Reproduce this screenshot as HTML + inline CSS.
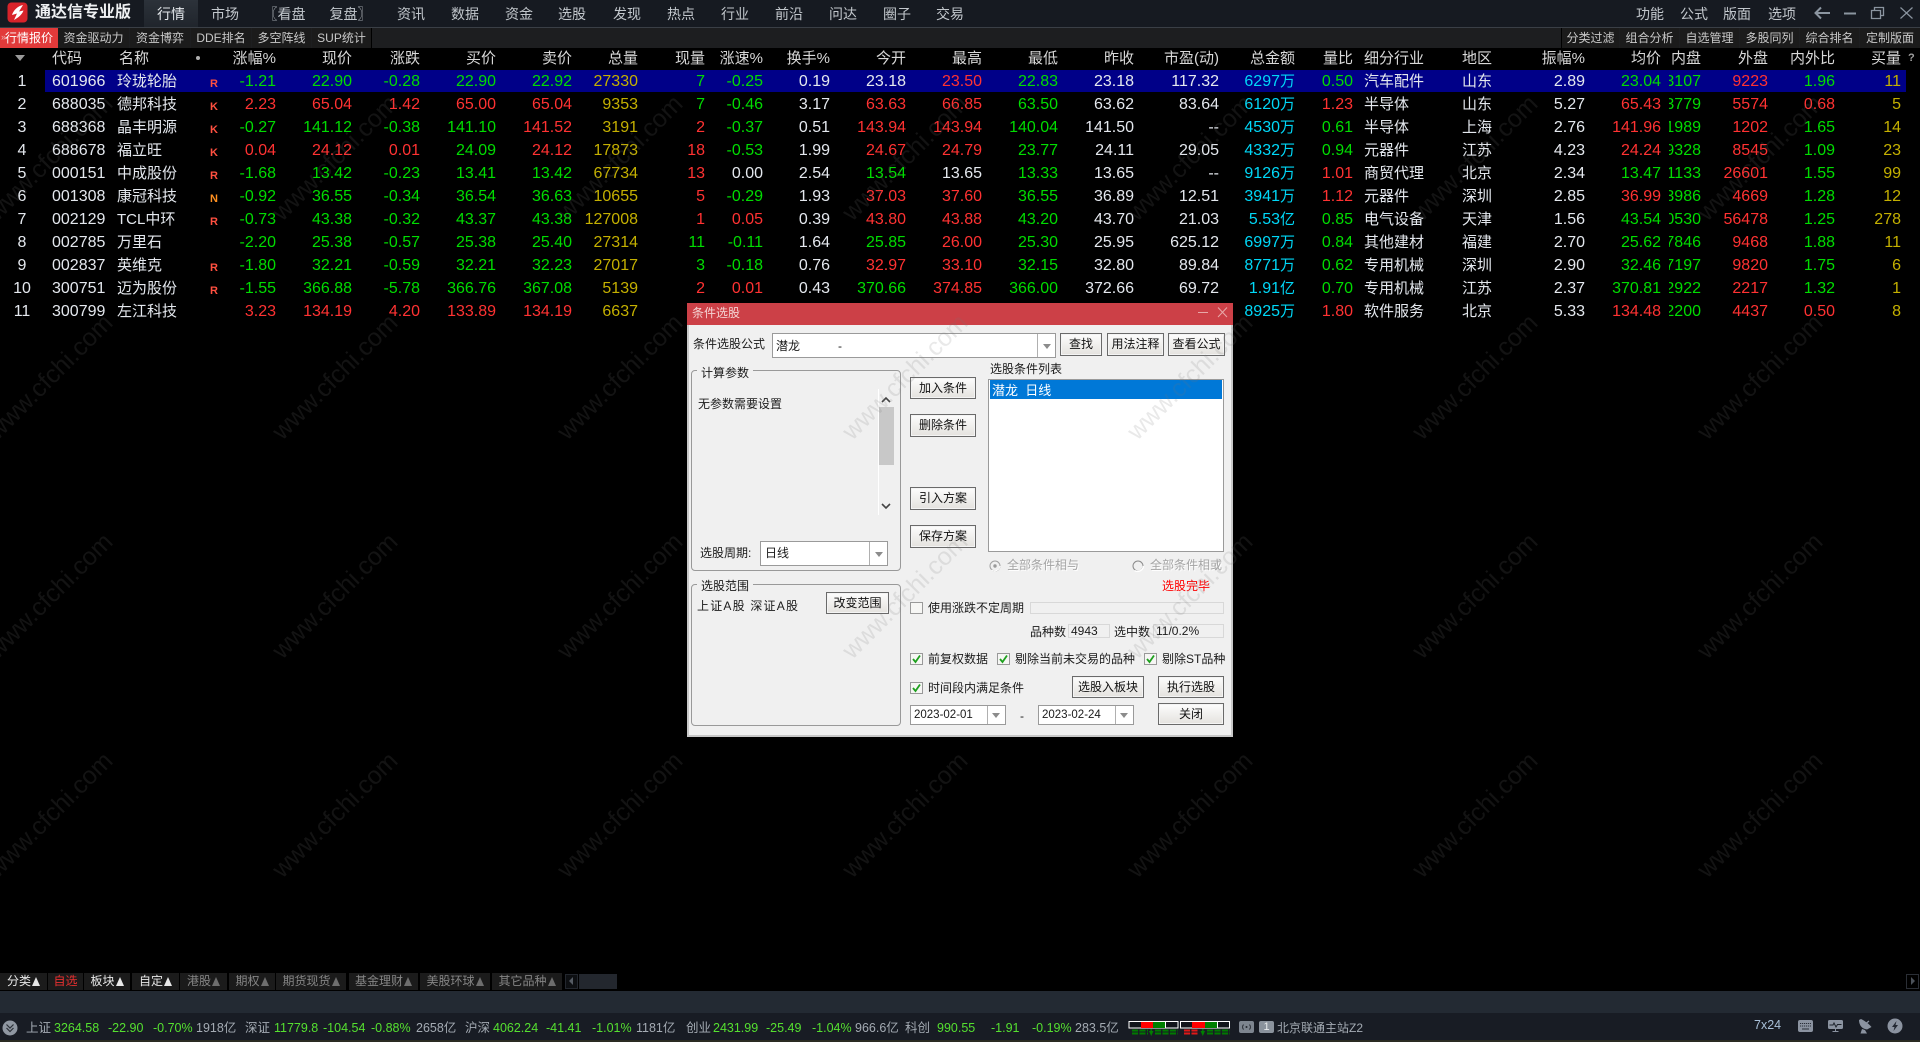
<!DOCTYPE html>
<html lang="zh"><head><meta charset="utf-8"><title>通达信专业版</title>
<style>
html,body{margin:0;padding:0;background:#000;width:1920px;height:1042px;overflow:hidden}
body{position:relative;font-family:"Liberation Sans","Noto Sans CJK SC",sans-serif;color:#e4e8ee}
div,span,svg{box-sizing:border-box}
.a{position:absolute}
.m{position:absolute;top:0;height:27px;line-height:29px;font-size:14px;color:#c2c7cc;transform:translateX(-50%);white-space:nowrap}
.st{position:absolute;top:28px;height:20px;line-height:20px;font-size:12px;color:#c8c8c8;background:#1b1b1b;text-align:center;white-space:nowrap;overflow:hidden}
.row{position:absolute;left:0;width:1920px;height:23px;line-height:23px}
.row span{position:absolute;top:0;white-space:nowrap;font-size:16px}
.row small{font-size:15px}
.row span:nth-child(1){left:0;width:44px;text-align:center}
.row span:nth-child(2){left:52px}
.row span:nth-child(3){left:117px;font-size:15px}
.row span:nth-child(4){left:210px;font-size:11px;font-weight:bold;top:3px;color:#ff5040}
.row span:nth-child(5){right:1644px}.row span:nth-child(6){right:1568px}.row span:nth-child(7){right:1500px}
.row span:nth-child(8){right:1424px}.row span:nth-child(9){right:1348px}.row span:nth-child(10){right:1282px;color:#c4b000}
.row span:nth-child(11){right:1215px}.row span:nth-child(12){right:1157px}.row span:nth-child(13){right:1090px}
.row span:nth-child(14){right:1014px}.row span:nth-child(15){right:938px}.row span:nth-child(16){right:862px}
.row span:nth-child(17){right:786px}.row span:nth-child(18){right:701px}.row span:nth-child(19){right:625px;color:#00d8f8}
.row span:nth-child(20){right:567px}.row span:nth-child(21){left:1364px;font-size:15px}.row span:nth-child(22){left:1462px;font-size:15px}
.row span:nth-child(23){right:335px}.row span:nth-child(24){right:259px}
.row span:nth-child(25){left:1669px;width:32px;overflow:hidden;text-align:right;direction:rtl;color:#00dc00}
.row span:nth-child(26){right:152px;color:#ff3232}.row span:nth-child(27){right:85px}.row span:nth-child(28){right:19px;color:#c4b000}
.hd span,.hd span:nth-child(n){font-size:15px;color:#d8d8d8;top:0}
.g{color:#00dc00}.r{color:#ff3232}
.t{position:absolute;white-space:nowrap;height:16px;line-height:16px;font-size:12px;color:#1a1a1a}
.btn{position:absolute;border:1px solid #6a6a6a;background:linear-gradient(#fdfdfd,#e4e2de);box-shadow:inset 0 0 0 1px #f4f4f4;font-size:12px;color:#111;text-align:center;white-space:nowrap}
.box{position:absolute;background:#fff;border:1px solid #9a9a9a}
.sep{position:absolute;width:1px;background:#b0b0b0}
.tri{position:absolute;width:0;height:0;border-left:4px solid transparent;border-right:4px solid transparent;border-top:5px solid #8c8c8c}
.grp{position:absolute;border:1px solid #999;border-radius:4px}
.lab{position:absolute;background:#f0f0f0;height:16px;line-height:16px;font-size:12px;color:#1a1a1a;padding:0 4px;white-space:nowrap}
.ck{position:absolute;width:13px;height:12px;border:1px solid #999;background:#f6f6f4}
.ck svg{position:absolute;left:0;top:0}
.dis{color:#a4a4a4;text-shadow:1px 1px 0 #fff}
.fld{position:absolute;border:1px solid #d8d8d8;height:14px;line-height:12px;font-size:12px;color:#1a1a1a;padding-left:2px;white-space:nowrap}
.tb{position:absolute;top:973px;height:17px;line-height:17px;background:#1b1b1b;font-size:12px;color:#e8e8e8;display:flex;align-items:center;justify-content:center;white-space:nowrap}
.tb i{display:inline-block;width:0;height:0;border-left:4px solid transparent;border-right:4px solid transparent;border-bottom:9px solid #e8e8e8;margin-left:1px}
.tb.d{color:#858585}.tb.d i{border-bottom-color:#6e6e6e}
.s{position:absolute;top:1020px;height:16px;line-height:16px;font-size:12.5px;white-space:nowrap;color:#a4abb3}
.s.n{color:#55e030}
.wm{position:absolute;width:220px;height:30px;margin-left:-110px;margin-top:-15px;line-height:30px;text-align:center;font-size:25px;color:rgba(120,120,120,.16);transform:rotate(-45deg);white-space:nowrap;z-index:50;pointer-events:none}
</style></head><body>

<!-- top bar -->
<div class="a" style="left:0;top:0;width:1920px;height:27px;background:#161a21"></div>
<div class="a" style="left:0;top:27px;width:1920px;height:1px;background:#3a3f46"></div>
<div class="a" style="left:144px;top:0;width:54px;height:27px;background:linear-gradient(#2c323a,#20252c)"></div>
<svg class="a" style="left:7px;top:2px" width="21" height="21" viewBox="0 0 21 21"><rect x="0.5" y="0.5" width="20" height="20" rx="4" fill="#d8232a"/><path d="M16 3 C11 4 6.5 8 5 13 L10 11.5 L7 18 C11.5 15.5 15 12.5 16.5 8.5 L12 9.5 Z" fill="#fff"/></svg>
<div class="a" style="left:35px;top:0;height:27px;line-height:26px;font-size:16px;font-weight:bold;color:#eef0f2;white-space:nowrap">通达信专业版</div>
<div class="m" style="left:171px;color:#e4e8ec">行情</div>
<div class="m" style="left:225px">市场</div>
<div class="m" style="left:288px"><span style="margin-left:-7px">〖</span>看盘</div>
<div class="m" style="left:347px">复盘<span style="margin-right:-7px">〗</span></div>
<div class="m" style="left:411px">资讯</div>
<div class="m" style="left:465px">数据</div>
<div class="m" style="left:519px">资金</div>
<div class="m" style="left:572px">选股</div>
<div class="m" style="left:627px">发现</div>
<div class="m" style="left:681px">热点</div>
<div class="m" style="left:735px">行业</div>
<div class="m" style="left:789px">前沿</div>
<div class="m" style="left:843px">问达</div>
<div class="m" style="left:897px">圈子</div>
<div class="m" style="left:950px">交易</div>
<div class="m" style="left:1650px">功能</div>
<div class="m" style="left:1694px">公式</div>
<div class="m" style="left:1737px">版面</div>
<div class="m" style="left:1782px">选项</div>
<svg class="a" style="left:1812px;top:4px" width="104" height="18" viewBox="0 0 104 18" fill="none" stroke="#8b95a0">
<path d="M3.5 9 H18 M9 3.5 L3.5 9 L9 14.5" stroke-width="2"/>
<path d="M32 9.5 H44" stroke-width="2"/>
<path d="M59.5 6.5 H68.5 V14.5 H59.5 Z M62.5 6.5 V3.5 H71.5 V11.5 H68.5" stroke-width="1.3"/>
<path d="M88.5 3.5 L100.5 14.5 M100.5 3.5 L88.5 14.5" stroke-width="1.2"/>
</svg>

<!-- sub bar -->
<div class="a" style="left:0;top:28px;width:1920px;height:20px;background:#1d1e20"></div>
<div class="st" style="left:0;width:58px;background:#e23a3a;color:#fff">行情报价</div>
<div class="a" style="left:1px;top:31px;font-size:9px;line-height:12px;color:#f0b0b0">»</div>
<div class="st" style="left:58px;width:71px">资金驱动力</div>
<div class="st" style="left:130px;width:60px">资金博弈</div>
<div class="st" style="left:191px;width:60px">DDE排名</div>
<div class="st" style="left:252px;width:59px">多空阵线</div>
<div class="st" style="left:312px;width:59px">SUP统计</div>
<div class="a" style="left:371px;top:28px;width:1px;height:20px;background:#000"></div>
<div class="st" style="left:1561px;width:58px;border-left:1px solid #000">分类过滤</div>
<div class="st" style="left:1620px;width:59px">组合分析</div>
<div class="st" style="left:1680px;width:59px">自选管理</div>
<div class="st" style="left:1740px;width:59px">多股同列</div>
<div class="st" style="left:1800px;width:59px">综合排名</div>
<div class="st" style="left:1860px;width:60px">定制版面</div>

<!-- table header -->
<div class="tri" style="left:15px;top:55px;border-left-width:5px;border-right-width:5px;border-top:6px solid #9a9a9a"></div>
<div class="a" style="left:196px;top:56px;width:4px;height:4px;border-radius:50%;background:#b0b0b0"></div>
<div class="row hd" style="top:47px"><span></span><span>代码</span><span style="left:119px">名称</span><span></span><span>涨幅%</span><span>现价</span><span>涨跌</span><span>买价</span><span>卖价</span><span>总量</span><span>现量</span><span>涨速%</span><span>换手%</span><span>今开</span><span>最高</span><span>最低</span><span>昨收</span><span>市盈(动)</span><span>总金额</span><span>量比</span><span>细分行业</span><span>地区</span><span>振幅%</span><span>均价</span><span>内盘</span><span>外盘</span><span>内外比</span><span>买量</span></div>
<div class="a" style="left:1908px;top:50px;font-size:11px;font-weight:bold;line-height:16px;color:#a0a0a0">?</div>

<!-- rows -->
<div class="a" style="left:45px;top:70px;width:1861px;height:22px;background:#000088"></div>
<div class="row" style="top:70px"><span>1</span><span>601966</span><span>玲珑轮胎</span><span>R</span><span class="g">-1.21</span><span class="g">22.90</span><span class="g">-0.28</span><span class="g">22.90</span><span class="g">22.92</span><span>27330</span><span class="g">7</span><span class="g">-0.25</span><span>0.19</span><span>23.18</span><span class="r">23.50</span><span class="g">22.83</span><span>23.18</span><span>117.32</span><span>6297<small>万</small></span><span class="g">0.50</span><span>汽车配件</span><span>山东</span><span>2.89</span><span class="g">23.04</span><span>3107</span><span>9223</span><span class="g">1.96</span><span>11</span></div>
<div class="row" style="top:93px"><span>2</span><span>688035</span><span>德邦科技</span><span>K</span><span class="r">2.23</span><span class="r">65.04</span><span class="r">1.42</span><span class="r">65.00</span><span class="r">65.04</span><span>9353</span><span class="g">7</span><span class="g">-0.46</span><span>3.17</span><span class="r">63.63</span><span class="r">66.85</span><span class="g">63.50</span><span>63.62</span><span>83.64</span><span>6120<small>万</small></span><span class="r">1.23</span><span>半导体</span><span>山东</span><span>5.27</span><span class="r">65.43</span><span>3779</span><span>5574</span><span class="r">0.68</span><span>5</span></div>
<div class="row" style="top:116px"><span>3</span><span>688368</span><span>晶丰明源</span><span>K</span><span class="g">-0.27</span><span class="g">141.12</span><span class="g">-0.38</span><span class="g">141.10</span><span class="r">141.52</span><span>3191</span><span class="r">2</span><span class="g">-0.37</span><span>0.51</span><span class="r">143.94</span><span class="r">143.94</span><span class="g">140.04</span><span>141.50</span><span>--</span><span>4530<small>万</small></span><span class="g">0.61</span><span>半导体</span><span>上海</span><span>2.76</span><span class="r">141.96</span><span>1989</span><span>1202</span><span class="g">1.65</span><span>14</span></div>
<div class="row" style="top:139px"><span>4</span><span>688678</span><span>福立旺</span><span>K</span><span class="r">0.04</span><span class="r">24.12</span><span class="r">0.01</span><span class="g">24.09</span><span class="r">24.12</span><span>17873</span><span class="r">18</span><span class="g">-0.53</span><span>1.99</span><span class="r">24.67</span><span class="r">24.79</span><span class="g">23.77</span><span>24.11</span><span>29.05</span><span>4332<small>万</small></span><span class="g">0.94</span><span>元器件</span><span>江苏</span><span>4.23</span><span class="r">24.24</span><span>9328</span><span>8545</span><span class="g">1.09</span><span>23</span></div>
<div class="row" style="top:162px"><span>5</span><span>000151</span><span>中成股份</span><span>R</span><span class="g">-1.68</span><span class="g">13.42</span><span class="g">-0.23</span><span class="g">13.41</span><span class="g">13.42</span><span>67734</span><span class="r">13</span><span>0.00</span><span>2.54</span><span class="g">13.54</span><span>13.65</span><span class="g">13.33</span><span>13.65</span><span>--</span><span>9126<small>万</small></span><span class="r">1.01</span><span>商贸代理</span><span>北京</span><span>2.34</span><span class="g">13.47</span><span>1133</span><span>26601</span><span class="g">1.55</span><span>99</span></div>
<div class="row" style="top:185px"><span>6</span><span>001308</span><span>康冠科技</span><span style="color:#ff9020">N</span><span class="g">-0.92</span><span class="g">36.55</span><span class="g">-0.34</span><span class="g">36.54</span><span class="g">36.63</span><span>10655</span><span class="r">5</span><span class="g">-0.29</span><span>1.93</span><span class="r">37.03</span><span class="r">37.60</span><span class="g">36.55</span><span>36.89</span><span>12.51</span><span>3941<small>万</small></span><span class="r">1.12</span><span>元器件</span><span>深圳</span><span>2.85</span><span class="r">36.99</span><span>3986</span><span>4669</span><span class="g">1.28</span><span>12</span></div>
<div class="row" style="top:208px"><span>7</span><span>002129</span><span>TCL中环</span><span>R</span><span class="g">-0.73</span><span class="g">43.38</span><span class="g">-0.32</span><span class="g">43.37</span><span class="g">43.38</span><span>127008</span><span class="r">1</span><span class="r">0.05</span><span>0.39</span><span class="r">43.80</span><span class="r">43.88</span><span class="g">43.20</span><span>43.70</span><span>21.03</span><span>5.53<small>亿</small></span><span class="g">0.85</span><span>电气设备</span><span>天津</span><span>1.56</span><span class="g">43.54</span><span>0530</span><span>56478</span><span class="g">1.25</span><span>278</span></div>
<div class="row" style="top:231px"><span>8</span><span>002785</span><span>万里石</span><span></span><span class="g">-2.20</span><span class="g">25.38</span><span class="g">-0.57</span><span class="g">25.38</span><span class="g">25.40</span><span>27314</span><span class="g">11</span><span class="g">-0.11</span><span>1.64</span><span class="g">25.85</span><span class="r">26.00</span><span class="g">25.30</span><span>25.95</span><span>625.12</span><span>6997<small>万</small></span><span class="g">0.84</span><span>其他建材</span><span>福建</span><span>2.70</span><span class="g">25.62</span><span>7846</span><span>9468</span><span class="g">1.88</span><span>11</span></div>
<div class="row" style="top:254px"><span>9</span><span>002837</span><span>英维克</span><span>R</span><span class="g">-1.80</span><span class="g">32.21</span><span class="g">-0.59</span><span class="g">32.21</span><span class="g">32.23</span><span>27017</span><span class="g">3</span><span class="g">-0.18</span><span>0.76</span><span class="r">32.97</span><span class="r">33.10</span><span class="g">32.15</span><span>32.80</span><span>89.84</span><span>8771<small>万</small></span><span class="g">0.62</span><span>专用机械</span><span>深圳</span><span>2.90</span><span class="g">32.46</span><span>7197</span><span>9820</span><span class="g">1.75</span><span>6</span></div>
<div class="row" style="top:277px"><span>10</span><span>300751</span><span>迈为股份</span><span>R</span><span class="g">-1.55</span><span class="g">366.88</span><span class="g">-5.78</span><span class="g">366.76</span><span class="g">367.08</span><span>5139</span><span class="r">2</span><span class="r">0.01</span><span>0.43</span><span class="g">370.66</span><span class="r">374.85</span><span class="g">366.00</span><span>372.66</span><span>69.72</span><span>1.91<small>亿</small></span><span class="g">0.70</span><span>专用机械</span><span>江苏</span><span>2.37</span><span class="g">370.81</span><span>2922</span><span>2217</span><span class="g">1.32</span><span>1</span></div>
<div class="row" style="top:300px"><span>11</span><span>300799</span><span>左江科技</span><span></span><span class="r">3.23</span><span class="r">134.19</span><span class="r">4.20</span><span class="r">133.89</span><span class="r">134.19</span><span>6637</span><span></span><span></span><span></span><span></span><span></span><span></span><span></span><span></span><span>8925<small>万</small></span><span class="r">1.80</span><span>软件服务</span><span>北京</span><span>5.33</span><span class="r">134.48</span><span>2200</span><span>4437</span><span class="r">0.50</span><span>8</span></div>

<!-- dialog -->
<div class="a" style="left:687px;top:303px;width:546px;height:434px;background:#f0f0f0;border:2px solid #c8c8c8;border-top:0"></div>
<div class="a" style="left:687px;top:303px;width:546px;height:22px;background:#cc4047"></div>
<div class="t" style="left:692px;top:305px;color:#f4d4d4">条件选股</div>
<svg class="a" style="left:1197px;top:306px" width="32" height="13" viewBox="0 0 32 13" fill="none" stroke="#e8a8a8"><path d="M1 6.5 H11"/><path d="M21 1.5 L30 11 M30 1.5 L21 11"/></svg>

<div class="t" style="left:693px;top:336px">条件选股公式</div>
<div class="box" style="left:772px;top:333px;width:284px;height:25px"></div>
<div class="sep" style="left:1037px;top:334px;height:23px"></div>
<div class="tri" style="left:1043px;top:344px"></div>
<div class="t" style="left:776px;top:338px">潜龙</div>
<div class="t" style="left:838px;top:338px">-</div>
<div class="btn" style="left:1060px;top:333px;width:42px;height:23px;line-height:21px">查找</div>
<div class="btn" style="left:1107px;top:333px;width:57px;height:23px;line-height:21px">用法注释</div>
<div class="btn" style="left:1168px;top:333px;width:57px;height:23px;line-height:21px">查看公式</div>

<div class="grp" style="left:691px;top:370px;width:210px;height:201px"></div>
<div class="lab" style="left:697px;top:365px">计算参数</div>
<div class="t" style="left:698px;top:396px">无参数需要设置</div>
<div class="a" style="left:878px;top:389px;width:1px;height:126px;background:#fff"></div>
<div class="a" style="left:879px;top:407px;width:15px;height:58px;background:#c8c8c8"></div>
<svg class="a" style="left:880px;top:395px" width="12" height="118" viewBox="0 0 12 118" fill="none" stroke="#444" stroke-width="1.6"><path d="M2 7 L6 3 L10 7"/><path d="M2 109 L6 113 L10 109"/></svg>
<div class="t" style="left:700px;top:545px">选股周期:</div>
<div class="box" style="left:760px;top:541px;width:128px;height:25px"></div>
<div class="sep" style="left:869px;top:542px;height:23px"></div>
<div class="tri" style="left:875px;top:552px"></div>
<div class="t" style="left:765px;top:545px">日线</div>

<div class="btn" style="left:910px;top:377px;width:66px;height:22px;line-height:20px">加入条件</div>
<div class="btn" style="left:910px;top:414px;width:66px;height:23px;line-height:21px">删除条件</div>
<div class="btn" style="left:910px;top:487px;width:66px;height:23px;line-height:21px">引入方案</div>
<div class="btn" style="left:910px;top:525px;width:66px;height:23px;line-height:21px">保存方案</div>

<div class="t" style="left:990px;top:361px">选股条件列表</div>
<div class="box" style="left:988px;top:379px;width:236px;height:173px"></div>
<div class="a" style="left:990px;top:380px;width:232px;height:19px;background:#0078d7"></div>
<div class="t" style="left:992px;top:383px;font-size:13px;color:#fff">潜龙&nbsp; 日线</div>

<svg class="a" style="left:988px;top:559px" width="14" height="14" viewBox="0 0 14 14"><circle cx="7" cy="7" r="5" fill="#f0f0f0" stroke="#a0a0a0"/><path d="M3.5 11 A5.5 5.5 0 0 0 12 7" fill="none" stroke="#fff"/><circle cx="7" cy="7" r="1.7" fill="#9a9a9a"/></svg>
<div class="t dis" style="left:1007px;top:557px">全部条件相与</div>
<svg class="a" style="left:1131px;top:559px" width="14" height="14" viewBox="0 0 14 14"><circle cx="7" cy="7" r="5" fill="#f0f0f0" stroke="#8a8a8a"/><path d="M3.5 11.5 A6 6 0 0 0 12.5 7" fill="none" stroke="#fff" stroke-width="1.5"/></svg>
<div class="t dis" style="left:1150px;top:557px">全部条件相或</div>
<div class="t" style="left:1162px;top:578px;color:#f00">选股完毕</div>

<div class="grp" style="left:691px;top:584px;width:210px;height:142px"></div>
<div class="lab" style="left:697px;top:578px">选股范围</div>
<div class="t" style="left:697px;top:598px;letter-spacing:1.2px">上证A股 深证A股</div>
<div class="btn" style="left:826px;top:592px;width:63px;height:22px;line-height:20px">改变范围</div>

<div class="ck" style="left:910px;top:602px"></div>
<div class="t" style="left:928px;top:600px">使用涨跌不定周期</div>
<div class="fld" style="left:1030px;top:602px;width:194px;height:12px"></div>
<div class="t" style="left:1030px;top:624px">品种数</div>
<div class="fld" style="left:1068px;top:624px;width:42px">4943</div>
<div class="t" style="left:1114px;top:624px">选中数</div>
<div class="fld" style="left:1153px;top:624px;width:71px">11/0.2%</div>

<div class="ck" style="left:910px;top:653px"><svg width="11" height="10" viewBox="0 0 11 10" fill="none"><path d="M2 5 L4.5 8 L9 1.5" stroke="#1ea01e" stroke-width="1.8"/></svg></div>
<div class="t" style="left:928px;top:651px">前复权数据</div>
<div class="ck" style="left:997px;top:653px"><svg width="11" height="10" viewBox="0 0 11 10" fill="none"><path d="M2 5 L4.5 8 L9 1.5" stroke="#1ea01e" stroke-width="1.8"/></svg></div>
<div class="t" style="left:1015px;top:651px">剔除当前未交易的品种</div>
<div class="ck" style="left:1144px;top:653px"><svg width="11" height="10" viewBox="0 0 11 10" fill="none"><path d="M2 5 L4.5 8 L9 1.5" stroke="#1ea01e" stroke-width="1.8"/></svg></div>
<div class="t" style="left:1162px;top:651px">剔除ST品种</div>
<div class="ck" style="left:910px;top:682px"><svg width="11" height="10" viewBox="0 0 11 10" fill="none"><path d="M2 5 L4.5 8 L9 1.5" stroke="#1ea01e" stroke-width="1.8"/></svg></div>
<div class="t" style="left:928px;top:680px">时间段内满足条件</div>
<div class="btn" style="left:1072px;top:676px;width:72px;height:22px;line-height:20px">选股入板块</div>
<div class="btn" style="left:1158px;top:676px;width:66px;height:22px;line-height:20px">执行选股</div>
<div class="btn" style="left:1158px;top:703px;width:66px;height:22px;line-height:20px">关闭</div>

<div class="box" style="left:910px;top:705px;width:96px;height:20px"></div>
<div class="sep" style="left:987px;top:706px;height:18px"></div>
<div class="tri" style="left:992px;top:713px"></div>
<div class="t" style="left:914px;top:707px;font-size:11.5px">2023-02-01</div>
<div class="t" style="left:1020px;top:708px">-</div>
<div class="box" style="left:1038px;top:705px;width:96px;height:20px"></div>
<div class="sep" style="left:1115px;top:706px;height:18px"></div>
<div class="tri" style="left:1120px;top:713px"></div>
<div class="t" style="left:1042px;top:707px;font-size:11.5px">2023-02-24</div>

<!-- bottom tabs -->
<div class="tb" style="left:0;width:47px">分类<i></i></div>
<div class="tb" style="left:48px;width:35px;color:#e83030">自选</div>
<div class="tb" style="left:84px;width:46px">板块<i></i></div>
<div class="tb" style="left:132px;width:47px">自定<i></i></div>
<div class="tb d" style="left:180px;width:47px">港股<i></i></div>
<div class="tb d" style="left:229px;width:46px">期权<i></i></div>
<div class="tb d" style="left:276px;width:70px">期货现货<i></i></div>
<div class="tb d" style="left:349px;width:69px">基金理财<i></i></div>
<div class="tb d" style="left:420px;width:70px">美股环球<i></i></div>
<div class="tb d" style="left:492px;width:70px">其它品种<i></i></div>
<div class="a" style="left:565px;top:974px;width:13px;height:15px;background:#0d0f12;border:1px solid #23272e"></div>
<div class="a" style="left:569px;top:977px;width:0;height:0;border-top:4px solid transparent;border-bottom:4px solid transparent;border-right:4px solid #555b63"></div>
<div class="a" style="left:579px;top:974px;width:38px;height:15px;background:#23272e"></div>
<div class="a" style="left:1906px;top:974px;width:13px;height:15px;border:1px solid #2a2e35"></div>
<div class="a" style="left:1911px;top:977px;width:0;height:0;border-top:4px solid transparent;border-bottom:4px solid transparent;border-left:4px solid #4c525a"></div>

<!-- status -->
<div class="a" style="left:0;top:991px;width:1920px;height:22px;background:#232a33"></div>
<div class="a" style="left:0;top:1013px;width:1920px;height:27px;background:#181c24"></div>
<div class="a" style="left:0;top:1040px;width:1920px;height:2px;background:#2a2b22"></div>
<svg class="a" style="left:2px;top:1020px" width="16" height="16" viewBox="0 0 16 16"><circle cx="8" cy="8" r="7.5" fill="#8f97a1"/><path d="M4.5 4.5 L8 8 L11.5 4.5 M4.5 8 L8 11.5 L11.5 8" fill="none" stroke="#2a2f37" stroke-width="1.2"/></svg>
<div class="s" style="left:26px">上证</div><div class="s n" style="left:54px">3264.58</div><div class="s n" style="left:108px">-22.90</div><div class="s n" style="left:153px">-0.70%</div><div class="s" style="left:196px">1918亿</div>
<div class="s" style="left:245px">深证</div><div class="s n" style="left:274px">11779.8</div><div class="s n" style="left:323px">-104.54</div><div class="s n" style="left:371px">-0.88%</div><div class="s" style="left:416px">2658亿</div>
<div class="s" style="left:465px">沪深</div><div class="s n" style="left:493px">4062.24</div><div class="s n" style="left:546px">-41.41</div><div class="s n" style="left:592px">-1.01%</div><div class="s" style="left:636px">1181亿</div>
<div class="s" style="left:686px">创业</div><div class="s n" style="left:713px">2431.99</div><div class="s n" style="left:766px">-25.49</div><div class="s n" style="left:812px">-1.04%</div><div class="s" style="left:855px">966.6亿</div>
<div class="s" style="left:905px">科创</div><div class="s n" style="left:937px">990.55</div><div class="s n" style="left:991px">-1.91</div><div class="s n" style="left:1032px">-0.19%</div><div class="s" style="left:1075px">283.5亿</div>
<svg class="a" style="left:1125px;top:1018px" width="110" height="18" viewBox="1125 1018 110 18">
<rect x="1129" y="1021.5" width="49" height="6.5" fill="#12151b" stroke="#fff"/>
<rect x="1141" y="1022" width="12" height="6" fill="#f00"/><rect x="1153" y="1022" width="12" height="6" fill="#008000"/><path d="M1165.5 1022 V1028" stroke="#fff"/>
<rect x="1180.5" y="1021.5" width="49" height="6.5" fill="#12151b" stroke="#fff"/>
<rect x="1192" y="1022" width="13" height="6" fill="#f00"/><rect x="1205" y="1022" width="12" height="6" fill="#008000"/><path d="M1217.5 1022 V1028" stroke="#fff"/>
<g stroke="#007a00" stroke-width="2" stroke-dasharray="6 1.5"><path d="M1132 1030.5 H1148 M1132 1033.5 H1148 M1155 1030.5 H1178 M1155 1033.5 H1178 M1207 1030.5 H1230 M1207 1033.5 H1230"/></g>
<g stroke="#e01818" stroke-width="2" stroke-dasharray="6 1.5"><path d="M1184 1030.5 H1199 M1184 1033.5 H1199"/></g>
<path d="M1149 1031 H1153.5 L1151.2 1036 Z" fill="#008000"/><path d="M1151.2 1029 V1033" stroke="#008000" stroke-width="1.4"/>
<path d="M1200.5 1031 H1205 L1202.8 1036 Z" fill="#008000"/><path d="M1202.8 1029 V1033" stroke="#008000" stroke-width="1.4"/>
</svg>
<svg class="a" style="left:1239px;top:1021px" width="15" height="12" viewBox="0 0 15 12"><rect width="15" height="12" rx="2" fill="#7d858f"/><circle cx="7.5" cy="6" r="1" fill="#23272e"/><path d="M4.5 3.5 A4 4 0 0 0 4.5 8.5 M10.5 3.5 A4 4 0 0 1 10.5 8.5" fill="none" stroke="#23272e"/></svg>
<div class="a" style="left:1259px;top:1021px;width:15px;height:12px;background:#8a929c;border-radius:2px;color:#e8eaec;font-size:11px;line-height:12px;text-align:center">1</div>
<div class="s" style="left:1277px;font-size:12px">北京联通主站Z2</div>

<div class="a" style="left:1754px;top:1017px;height:16px;line-height:16px;font-size:12.5px;color:#a9c0d8;white-space:nowrap">7x24</div>
<svg class="a" style="left:1798px;top:1020px" width="15" height="12" viewBox="0 0 15 12"><rect width="15" height="12" rx="2" fill="#8b93a0"/><path d="M2 3.5 H13 M2 6 H13" stroke="#2a2f38" stroke-dasharray="1.2 .8"/><path d="M4 9 H11" stroke="#2a2f38"/></svg>
<svg class="a" style="left:1828px;top:1020px" width="15" height="12" viewBox="0 0 15 12"><rect width="15" height="9" rx="1.5" fill="#8b93a0"/><path d="M1.5 5 H5 L6 3 L8 7 L9.5 4.5 H13.5" fill="none" stroke="#1e232b"/><path d="M7.5 9 V11 M4.5 11.5 H10.5" stroke="#8b93a0"/></svg>
<svg class="a" style="left:1858px;top:1019px" width="14" height="15" viewBox="0 0 14 15"><path d="M1 1 C1 6 4 10 9 10.5 L13.5 8 C11 5 7 2 3 0 Z" fill="#8b93a0"/><path d="M6 6 L11 2" stroke="#8b93a0" stroke-width="1.2"/><path d="M4 10 L2.5 14.5 H9 L7 11 Z" fill="#8b93a0"/></svg>
<svg class="a" style="left:1887px;top:1018px" width="16" height="16" viewBox="0 0 16 16"><circle cx="8" cy="8" r="7.5" fill="#8b93a0"/><path d="M9.5 3 L5 9 H7.5 L6.5 13 L11 7 H8.5 Z" fill="#232832"/></svg>

<!-- watermark -->
<div class="wm" style="left:50px;top:158px">www.cfchi.com</div><div class="wm" style="left:335px;top:158px">www.cfchi.com</div><div class="wm" style="left:620px;top:158px">www.cfchi.com</div><div class="wm" style="left:905px;top:158px">www.cfchi.com</div><div class="wm" style="left:1190px;top:158px">www.cfchi.com</div><div class="wm" style="left:1475px;top:158px">www.cfchi.com</div><div class="wm" style="left:1760px;top:158px">www.cfchi.com</div>
<div class="wm" style="left:50px;top:377px">www.cfchi.com</div><div class="wm" style="left:335px;top:377px">www.cfchi.com</div><div class="wm" style="left:620px;top:377px">www.cfchi.com</div><div class="wm" style="left:905px;top:377px">www.cfchi.com</div><div class="wm" style="left:1190px;top:377px">www.cfchi.com</div><div class="wm" style="left:1475px;top:377px">www.cfchi.com</div><div class="wm" style="left:1760px;top:377px">www.cfchi.com</div>
<div class="wm" style="left:50px;top:596px">www.cfchi.com</div><div class="wm" style="left:335px;top:596px">www.cfchi.com</div><div class="wm" style="left:620px;top:596px">www.cfchi.com</div><div class="wm" style="left:905px;top:596px">www.cfchi.com</div><div class="wm" style="left:1190px;top:596px">www.cfchi.com</div><div class="wm" style="left:1475px;top:596px">www.cfchi.com</div><div class="wm" style="left:1760px;top:596px">www.cfchi.com</div>
<div class="wm" style="left:50px;top:815px">www.cfchi.com</div><div class="wm" style="left:335px;top:815px">www.cfchi.com</div><div class="wm" style="left:620px;top:815px">www.cfchi.com</div><div class="wm" style="left:905px;top:815px">www.cfchi.com</div><div class="wm" style="left:1190px;top:815px">www.cfchi.com</div><div class="wm" style="left:1475px;top:815px">www.cfchi.com</div><div class="wm" style="left:1760px;top:815px">www.cfchi.com</div>
</body></html>
